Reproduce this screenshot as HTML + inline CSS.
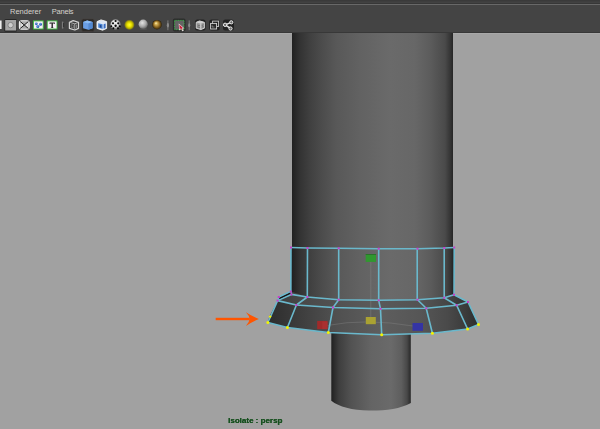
<!DOCTYPE html>
<html><head><meta charset="utf-8">
<style>
html,body{margin:0;padding:0;}
body{width:600px;height:429px;overflow:hidden;position:relative;background:#a1a1a1;font-family:"Liberation Sans",sans-serif;}
.abs{position:absolute;}
#topband{left:0;top:0;width:600px;height:4px;background:linear-gradient(#3a3a3a 0,#3a3a3a 1px,#3e3e3e 1px,#3e3e3e 2px,#424242 2px,#424242 3px,#373737 3px,#373737 4px);}
#hl{left:0;top:4px;width:600px;height:1px;background:#686868;}
#bar{left:0;top:5px;width:600px;height:27px;background:#444444;}
#barline{left:0;top:32px;width:600px;height:1px;background:#383838;}
#vtop{left:0;top:33px;width:600px;height:1px;background:#a9a9a9;}
.menu{top:7px;font-size:7.5px;color:#d6d2cc;line-height:10px;}
#iso{left:228px;top:416px;font-size:8px;font-weight:bold;color:#17501f;line-height:10px;text-shadow:0.3px 0 0 #17501f;will-change:transform;}
svg{position:absolute;left:0;top:0;}
</style></head>
<body>
<div class="abs" id="topband"></div>
<div class="abs" id="hl"></div>
<div class="abs" id="bar"></div>
<div class="abs" id="barline"></div>
<div class="abs" id="vtop"></div>
<div class="abs menu" style="left:10px;">Renderer</div>
<div class="abs menu" style="left:51.7px;letter-spacing:-0.2px;">Panels</div>

<!-- toolbar -->
<svg width="600" height="33" viewBox="0 0 600 33">
  <defs>
    <radialGradient id="gy" cx="0.5" cy="0.5" r="0.5"><stop offset="0" stop-color="#ffff30"/><stop offset="0.35" stop-color="#eee600"/><stop offset="0.65" stop-color="#b8b000"/><stop offset="0.85" stop-color="#6a6628"/><stop offset="1" stop-color="#444" stop-opacity="0"/></radialGradient>
    <radialGradient id="gg" cx="0.4" cy="0.35" r="0.65"><stop offset="0" stop-color="#e4e4e4"/><stop offset="0.6" stop-color="#aaaaaa"/><stop offset="1" stop-color="#6a6a6a"/></radialGradient>
    <radialGradient id="ggold" cx="0.5" cy="0.5" r="0.5" fx="0.38" fy="0.32"><stop offset="0" stop-color="#fff4c8"/><stop offset="0.25" stop-color="#d8b458"/><stop offset="0.65" stop-color="#8a6420"/><stop offset="1" stop-color="#2e220c"/></radialGradient>
    <radialGradient id="gblue" cx="0.4" cy="0.35" r="0.7"><stop offset="0" stop-color="#6aa0f0"/><stop offset="1" stop-color="#1a4aa0"/></radialGradient>
    <pattern id="chk" width="3.4" height="3.4" patternUnits="userSpaceOnUse" x="115.5" y="21" patternTransform="rotate(45 115.5 24.5)"><rect width="3.4" height="3.4" fill="#f2f2f2"/><rect width="1.7" height="1.7" fill="#0e0e0e"/><rect x="1.7" y="1.7" width="1.7" height="1.7" fill="#0e0e0e"/></pattern>
    <radialGradient id="chkshade" cx="0.45" cy="0.42" r="0.6"><stop offset="0.5" stop-color="#000" stop-opacity="0"/><stop offset="1" stop-color="#000" stop-opacity="0.65"/></radialGradient>
  </defs>
  <rect x="0" y="20.5" width="1.6" height="8.5" fill="#ececec"/>
  <!-- icon1 pressed gray -->
  <rect x="4.3" y="19" width="12.7" height="12.7" rx="1.5" fill="#282828"/>
  <rect x="5.2" y="20" width="11" height="10.5" fill="#a6a6a6"/>
  <circle cx="10.6" cy="25.1" r="2.7" fill="#cdcdcd" stroke="#7e7e7e" stroke-width="0.9"/>
  <!-- X icon -->
  <rect x="19.4" y="20.8" width="9.8" height="8.4" rx="2.2" fill="#a8a8a8" stroke="#f0f0f0" stroke-width="1.1"/>
  <path d="M20.4,22 L24.3,25 L20.4,28 Z M28.2,22 L24.3,25 L28.2,28 Z" fill="#dedede"/>
  <path d="M20.2,21.5 L28.4,28.5 M28.4,21.5 L20.2,28.5" stroke="#202020" stroke-width="1"/>
  <!-- balls icon -->
  <rect x="33.4" y="20.9" width="9.8" height="8.1" fill="#f6eef6" stroke="#3cb83c" stroke-width="0.9"/>
  <circle cx="36.3" cy="23.8" r="1.4" fill="url(#gblue)"/>
  <circle cx="40.5" cy="24.2" r="1.5" fill="url(#gblue)"/>
  <circle cx="37.8" cy="26.6" r="1.5" fill="url(#gblue)"/>
  <!-- T icon -->
  <rect x="47.2" y="20.9" width="9.8" height="8.1" fill="#f6eef6" stroke="#3cb83c" stroke-width="0.9"/>
  <path d="M49.6,22.5 L54.8,22.5 L54.8,24 L54.2,24 L54,23.5 L52.9,23.5 L52.9,27.4 L53.6,27.7 L53.6,28 L50.8,28 L50.8,27.7 L51.5,27.4 L51.5,23.5 L50.4,23.5 L50.2,24 L49.6,24 Z" fill="#262626"/>
  <!-- separator -->
  <path d="M62.6,21.6 L62.6,28.6" stroke="#7a7a7a" stroke-width="1.4"/>
  <path d="M63.6,23 L63.6,27" stroke="#2a2a2a" stroke-width="0.8"/>
  <!-- wire cube -->
  <polygon points="73.2,20.6 78.5,22.2 78.5,28.4 74.8,30 69.4,28.4 69.4,22.2" fill="#3a3a3a" stroke="#d4d4d4" stroke-width="1.2" stroke-linejoin="round"/>
  <path d="M69.8,22.4 L74.8,23.8 L78.2,22.4 M74.8,23.8 L74.8,29.6" stroke="#b8b8b8" stroke-width="0.9" fill="none"/>
  <path d="M71.2,24.6 L73.4,25.2 L73.4,28 L71.2,27.4 Z" fill="none" stroke="#8a8a8a" stroke-width="0.7"/>
  <path d="M76.6,24.6 L76.6,28" stroke="#a0a0a0" stroke-width="0.8"/>
  <!-- blue cube pressed -->
  <rect x="81.7" y="19" width="12.4" height="12.4" rx="1.5" fill="#2c2a28" stroke="#48423c" stroke-width="0.6"/>
  <polygon points="87.2,20.4 92.6,22 92.6,28.2 88.4,29.8 83.1,28.2 83.1,22" fill="#6a9ee4"/>
  <polygon points="83.1,22 87.2,20.4 92.6,22 88.4,23.4" fill="#8abaf2"/>
  <polygon points="88.4,23.4 92.6,22 92.6,28.2 88.4,29.8" fill="#5288d0"/>
  <!-- blue cube wireframe on shaded -->
  <polygon points="101,19.9 106.6,21.6 106.6,28.4 102.6,30.2 97,28.4 97,21.6" fill="#dce6f4" stroke="#f4f4f4" stroke-width="0.9" stroke-linejoin="round"/>
  <polygon points="98.2,23.2 102.6,24.3 102.6,29 98.2,27.6" fill="#4a86d6"/>
  <polygon points="103.6,24.3 105.6,23.5 105.6,27.9 103.6,28.8" fill="#3a6cc0"/>
  <path d="M99.8,24.8 L99.8,27.4 L101.4,27.8 L101.4,25.2 Z" fill="#24488e"/>
  <!-- checker ball -->
  <circle cx="115.5" cy="24.5" r="5" fill="#ececec"/>
  <g fill="#0a0a0a"><circle cx="115.6" cy="21" r="1.1"/><circle cx="113" cy="23.3" r="1.1"/><circle cx="118.2" cy="23.3" r="1.1"/><circle cx="115.6" cy="25.8" r="1.2"/><circle cx="111.3" cy="26.2" r="0.9"/><circle cx="119.8" cy="26.2" r="1"/><circle cx="113.4" cy="28.3" r="1"/><circle cx="118" cy="28.3" r="1"/></g>
  <circle cx="115.5" cy="24.5" r="5" fill="url(#chkshade)"/>
  <!-- yellow ball -->
  <circle cx="129.4" cy="24.8" r="5.6" fill="url(#gy)"/>
  <!-- gray ball -->
  <ellipse cx="143.3" cy="29" rx="3.6" ry="0.9" fill="#5a5a5a" opacity="0.7"/>
  <circle cx="143.2" cy="24.2" r="4.6" fill="url(#gg)"/>
  <!-- gold ball -->
  <circle cx="157" cy="24.7" r="4.8" fill="url(#ggold)"/>
  <!-- separator -->
  <path d="M167.9,20.4 L167.9,30.2" stroke="#7e7e7e" stroke-width="1"/>
  <ellipse cx="167.9" cy="25.3" rx="1.1" ry="2.2" fill="#8a8a8a"/>
  <!-- select pressed -->
  <rect x="172.8" y="18.6" width="12.8" height="13" rx="2" fill="#2c2c2c"/>
  <rect x="174.6" y="20.4" width="9.4" height="9.2" fill="#646464" stroke="#3cb04a" stroke-width="0.9" stroke-dasharray="1.1 0.6"/>
  <polygon points="178.7,23.5 184.2,28.2 182.2,28.5 183.8,30.8 182.4,31.2 181,29 179.2,30.4" fill="#f0f0f0"/>
  <polygon points="179.3,24.6 183,28 181.6,28.2 182.6,30 182,30.2 180.8,28.4 179.6,29.3" fill="#c8203a"/>
  <!-- separator -->
  <path d="M189.2,20.4 L189.2,30.2" stroke="#7e7e7e" stroke-width="1"/>
  <ellipse cx="189.2" cy="25.3" rx="1" ry="2" fill="#8a8a8a"/>
  <!-- cube icon -->
  <rect x="195" y="19.6" width="10.6" height="10.8" rx="2.5" fill="#222222"/>
  <polygon points="199.6,20.9 204.4,22.3 204.4,28.2 200.8,29.6 196.2,28.2 196.2,22.3" fill="#9c9c9c" stroke="#d8d8d8" stroke-width="0.9" stroke-linejoin="round"/>
  <polygon points="196.2,22.3 199.6,20.9 204.4,22.3 200.8,23.7" fill="#d0d0d0"/>
  <path d="M200.8,23.7 L200.8,29.6" stroke="#e0e0e0" stroke-width="0.8"/>
  <path d="M197.4,25 L199.8,25.7 M197.4,26.8 L199.8,27.5 M201.8,25.4 L203.6,24.8 M201.8,27.2 L203.6,26.6" stroke="#555" stroke-width="0.7"/>
  <!-- two squares -->
  <rect x="209.2" y="19.6" width="10.6" height="10.8" rx="2.5" fill="#222222"/>
  <rect x="212.6" y="21.1" width="6" height="5.4" fill="none" stroke="#c8c8c8" stroke-width="0.9"/>
  <rect x="210.6" y="23.4" width="6" height="5.6" fill="#2a2a2a" stroke="#d4d4d4" stroke-width="0.9"/>
  <path d="M212,27 L214.5,27 M212.2,25.3 L212.2,27" stroke="#9a9a9a" stroke-width="0.7"/>
  <!-- share -->
  <rect x="223" y="19.6" width="11" height="10.8" rx="2.5" fill="#222222"/>
  <path d="M225.2,24.8 L231.2,22.4 M225.2,24.8 L230.5,28.4" stroke="#e4e4e4" stroke-width="1.4"/>
  <circle cx="225.1" cy="24.8" r="1.7" fill="#6a6a6a" stroke="#f0f0f0" stroke-width="1"/>
  <circle cx="231.3" cy="22.3" r="1.6" fill="#6a6a6a" stroke="#f0f0f0" stroke-width="1"/>
  <circle cx="230.5" cy="28.5" r="1.6" fill="#6a6a6a" stroke="#f0f0f0" stroke-width="1"/>
</svg>

<!-- scene -->
<svg width="600" height="429" viewBox="0 0 600 429" style="top:0">
  <defs>
    <linearGradient id="cylU" gradientUnits="userSpaceOnUse" x1="291" y1="0" x2="454" y2="0">
      <stop offset="0" stop-color="#1e1e1e"/>
      <stop offset="0.02" stop-color="#262626"/>
      <stop offset="0.055" stop-color="#333333"/>
      <stop offset="0.117" stop-color="#404040"/>
      <stop offset="0.19" stop-color="#4c4c4c"/>
      <stop offset="0.276" stop-color="#585858"/>
      <stop offset="0.423" stop-color="#626262"/>
      <stop offset="0.607" stop-color="#6a6a6a"/>
      <stop offset="0.76" stop-color="#676767"/>
      <stop offset="0.853" stop-color="#5c5c5c"/>
      <stop offset="0.945" stop-color="#4a4a4a"/>
      <stop offset="0.975" stop-color="#363636"/>
      <stop offset="1" stop-color="#202020"/>
    </linearGradient>
    <linearGradient id="cylL" gradientUnits="userSpaceOnUse" x1="331" y1="0" x2="411" y2="0">
      <stop offset="0" stop-color="#1e1e1e"/>
      <stop offset="0.04" stop-color="#2c2c2c"/>
      <stop offset="0.1" stop-color="#3e3e3e"/>
      <stop offset="0.25" stop-color="#525252"/>
      <stop offset="0.5" stop-color="#646464"/>
      <stop offset="0.75" stop-color="#6a6a6a"/>
      <stop offset="0.88" stop-color="#5e5e5e"/>
      <stop offset="0.95" stop-color="#484848"/>
      <stop offset="1" stop-color="#262626"/>
    </linearGradient>
    <linearGradient id="flare" gradientUnits="userSpaceOnUse" x1="267" y1="0" x2="479" y2="0">
      <stop offset="0" stop-color="#2c2c2c"/>
      <stop offset="0.11" stop-color="#383838"/>
      <stop offset="0.3" stop-color="#4e4e4e"/>
      <stop offset="0.53" stop-color="#5e5e5e"/>
      <stop offset="0.72" stop-color="#565656"/>
      <stop offset="0.85" stop-color="#4a4a4a"/>
      <stop offset="0.93" stop-color="#3c3c3c"/>
      <stop offset="1" stop-color="#2c2c2c"/>
    </linearGradient>
    <linearGradient id="ring" gradientUnits="userSpaceOnUse" x1="277" y1="0" x2="468" y2="0">
      <stop offset="0" stop-color="#3c3c3c"/>
      <stop offset="0.15" stop-color="#4a4a4a"/>
      <stop offset="0.5" stop-color="#5a5a5a"/>
      <stop offset="0.78" stop-color="#525252"/>
      <stop offset="0.9" stop-color="#444444"/>
      <stop offset="1" stop-color="#303030"/>
    </linearGradient>
  </defs>

  <!-- upper cylinder -->
  <rect x="292" y="33" width="161" height="265" fill="url(#cylU)"/>
  <!-- lower cylinder -->
  <path d="M331.3,325 L410.8,325 L410.8,403 C400,409 385,410.8 369,410.6 C352,410.2 339,407 331.3,400.8 Z" fill="url(#cylL)"/>

  <!-- collar top band -->
  <polygon points="291,247.5 307.5,248 338.7,248.3 378.7,248.7 417.5,248.7 444.2,248 454.2,247.5 454,294.7 444.2,297.7 417.5,299.7 378.7,300.3 338.7,299.7 307.3,297 291.2,291.6" fill="url(#cylU)"/>
  <!-- ring face -->
  <polygon points="291.2,291.6 307.3,297 338.7,299.7 378.7,300.3 417.5,299.7 444.2,297.7 454,294.7 468,302 456.6,305.2 426.2,308.3 380.5,308.8 333,307.5 296.4,305 277.7,300.7 278.6,297" fill="url(#ring)"/>
  <!-- flare side -->
  <polygon points="277.7,300.7 296.4,305 333,307.5 380.5,308.8 426.2,308.3 456.6,305.2 468,302 478.5,324.5 467.6,329 432.4,333.2 381.7,334.7 328.3,332.5 287.4,327.5 267.9,322.5 269.3,316.5" fill="url(#flare)"/>

  <!-- manipulator lines -->
  <line x1="370.8" y1="262" x2="370.8" y2="317" stroke="#8a8a8a" stroke-width="0.6" opacity="0.7"/>
  <path d="M327,325.5 Q366,318 413,326" fill="none" stroke="#8c8c8c" stroke-width="0.6" opacity="0.6"/>

  <!-- wire edges -->
  <g fill="none" stroke="#6ab8cc" stroke-width="1.6" stroke-linejoin="round">
    <path d="M291,247.5 L307.5,248 L338.7,248.3 L378.7,248.7 L417.5,248.7 L444.2,248 L454.2,247.5"/>
    <path d="M291,247.5 L290.8,291.6 M307.5,248 L307.3,297 M338.7,248.3 L338.7,299.7 M378.7,248.7 L378.7,300.3 M417.2,248.7 L417.2,299.7 M444.2,248 L444.2,297.7 M454.2,247.5 L454,294.7"/>
    <path d="M290.8,291.6 L291.4,294.4 L307.3,297 L338.7,299.7 L378.7,300.3 L417.5,299.7 L444.2,297.7 L454,294.7"/>
    <path d="M290.8,291.6 L278.8,297 L277.6,300.6 L296.4,305 L333,307.5 L380.5,308.8 L426.2,308.3 L456.6,305.2 L468,302 L454,294.7"/>
    <path d="M291.4,294.4 L277.6,300.6"/>
    <path d="M307.3,297 L296.4,305 M338.7,299.7 L333,307.5 M378.7,300.3 L380.5,308.8 M417.5,299.7 L426.2,308.3 M444.2,297.7 L456.6,305.2"/>
    <path d="M277.6,300.6 L267.9,322.5 L287.4,327.5 L328.3,332.5 L381.7,334.7 L432.4,333.2 L467.6,329 L478.5,324.5 L468,302"/>
    <path d="M296.4,305 L287.4,327.5 M333,307.5 L328.3,332.5 M380.5,308.8 L381.7,334.7 M426.2,308.3 L432.4,333.2 M456.6,305.2 L467.6,329"/>
  </g>
  <path d="M290.6,293.1 L279.4,298.6" stroke="#141414" stroke-width="1.1"/>

  <!-- vertices -->
  <g fill="#c83cc8">
    <rect x="290.00" y="246.50" width="2" height="2"/>
    <rect x="306.50" y="247.00" width="2" height="2"/>
    <rect x="337.70" y="247.30" width="2" height="2"/>
    <rect x="377.70" y="247.70" width="2" height="2"/>
    <rect x="416.50" y="247.70" width="2" height="2"/>
    <rect x="443.20" y="247.00" width="2" height="2"/>
    <rect x="453.20" y="246.50" width="2" height="2"/>
    <rect x="289.80" y="290.60" width="2" height="2"/>
    <rect x="290.40" y="293.40" width="2" height="2"/>
    <rect x="306.30" y="296.00" width="2" height="2"/>
    <rect x="337.70" y="298.70" width="2" height="2"/>
    <rect x="377.70" y="299.30" width="2" height="2"/>
    <rect x="416.50" y="298.70" width="2" height="2"/>
    <rect x="443.20" y="296.70" width="2" height="2"/>
    <rect x="453.00" y="293.70" width="2" height="2"/>
    <rect x="277.80" y="296.00" width="2" height="2"/>
    <rect x="276.60" y="299.60" width="2" height="2"/>
    <rect x="295.40" y="304.00" width="2" height="2"/>
    <rect x="332.00" y="306.50" width="2" height="2"/>
    <rect x="379.50" y="307.80" width="2" height="2"/>
    <rect x="425.20" y="307.30" width="2" height="2"/>
    <rect x="455.60" y="304.20" width="2" height="2"/>
    <rect x="467.00" y="301.00" width="2" height="2"/>
  </g>
  <g fill="#f4f400">
    <circle cx="270.1" cy="316.6" r="1.2"/>
    <circle cx="267.9" cy="322.5" r="1.5"/>
    <circle cx="287.4" cy="327.5" r="1.5"/>
    <circle cx="328.3" cy="332.5" r="1.5"/>
    <circle cx="381.7" cy="334.7" r="1.5"/>
    <circle cx="432.4" cy="333.2" r="1.5"/>
    <circle cx="467.6" cy="329" r="1.5"/>
    <circle cx="478.5" cy="324.5" r="1.5"/>
  </g>

  <!-- manipulator cubes -->
  <rect x="365.7" y="254.1" width="10.3" height="7.8" fill="#30982f"/><rect x="365.7" y="254.1" width="10.3" height="0.8" fill="#2a6a2a"/>
  <rect x="317.2" y="320.9" width="10.3" height="8.2" fill="#a02a2a"/><rect x="322.2" y="321.5" width="5.3" height="7.6" fill="#aa3030"/>
  <rect x="365.8" y="317" width="10" height="7.2" fill="#aaa232"/>
  <rect x="412.5" y="323" width="10.5" height="7.8" fill="#3434a4"/>

  <!-- orange arrow -->
  <rect x="215.7" y="317.8" width="34" height="2.4" fill="#ff5500"/>
  <path d="M258.9,319 Q253,316.8 245.9,312.2 Q249.3,315.6 249.6,319 Q249.3,322.4 245.9,326 Q253,321.2 258.9,319 Z" fill="#ff5500"/>
</svg>

<div class="abs" id="iso">Isolate : persp</div>
</body></html>
